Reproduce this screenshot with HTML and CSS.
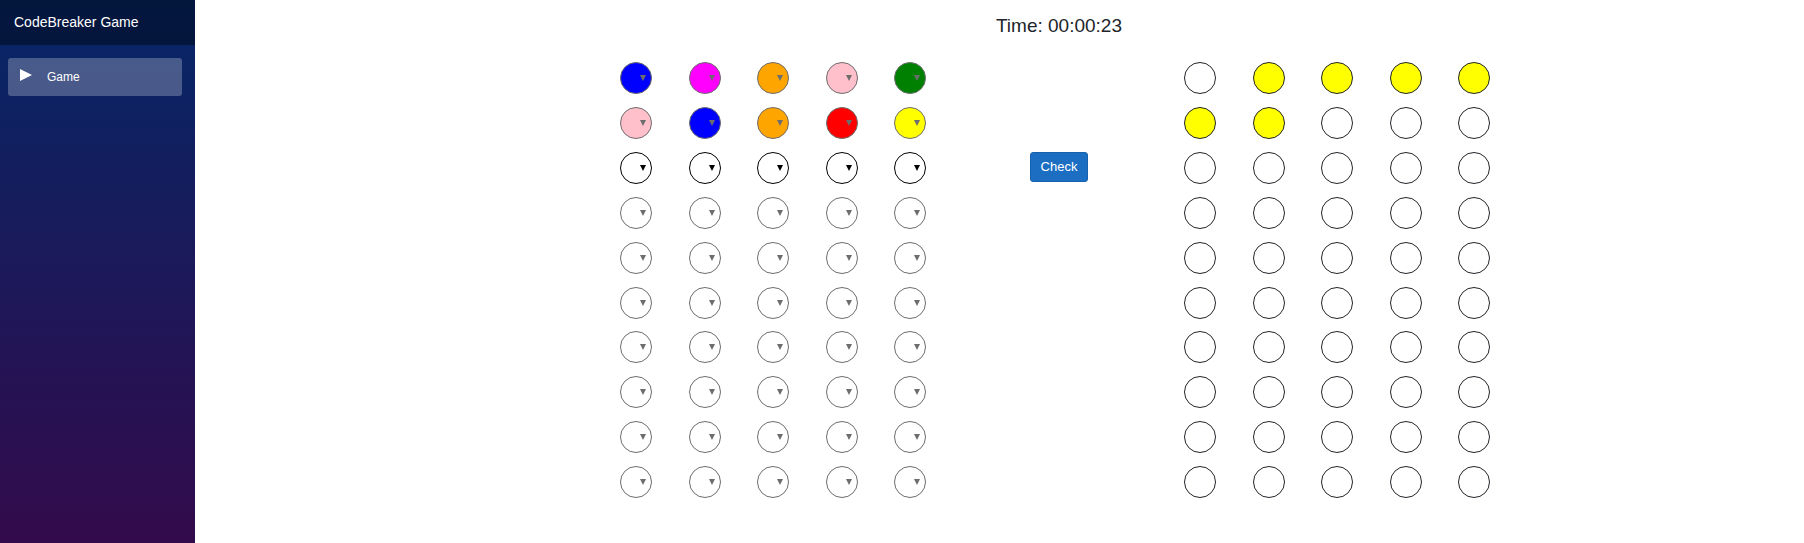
FILE: index.html
```html
<!DOCTYPE html>
<html lang="en">
<head>
<meta charset="utf-8">
<title>CodeBreaker Game</title>
<link rel="stylesheet" href="styles.css">
</head>
<body>
<div class="page">
  <aside class="sidebar">
    <header class="sidebar-top"><a class="brand" href="#">CodeBreaker Game</a></header>
    <nav class="menu">
      <a class="menu-link" href="#">
        <svg class="menu-icon" viewBox="0 0 12 12" aria-hidden="true"><path d="M0 0v12l12-6z" fill="#fff"/></svg>
        <span>Game</span>
      </a>
    </nav>
  </aside>
  <main class="content">
    <div class="columns">
      <h1 class="timer">Time: 00:00:23</h1>
    </div>
    <div class="board" id="board"></div>
  </main>
</div>
<script src="board.js"></script>
</body>
</html>
```
FILE: styles.css
```css
* {
  box-sizing: border-box;
}

body {
  margin: 0;
  background: #fff;
  color: #212529;
  font-family: "Liberation Sans", Arial, sans-serif;
  font-size: 13px;
}

.page {
  display: flex;
  min-height: 100vh;
}

.sidebar {
  flex: none;
  width: 195px;
  background: linear-gradient(180deg, rgb(5, 39, 103) 0%, #3a0647 116%);
}

.sidebar-top {
  display: flex;
  align-items: center;
  height: 45px;
  padding: 0 14px 2px;
  background: rgba(0, 0, 0, 0.4);
}

.brand {
  color: #fff;
  font-size: 14px;
  text-decoration: none;
}

.menu {
  padding: 13px 13px 0 8px;
}

.menu-link {
  display: flex;
  align-items: center;
  gap: 15px;
  height: 38px;
  padding: 0 12px;
  border-radius: 3px;
  background: rgba(255, 255, 255, 0.25);
  color: #fff;
  font-size: 12px;
  text-decoration: none;
}

.menu-icon {
  width: 12px;
  height: 12px;
  margin-bottom: 4px;
}

.content {
  flex: 1;
  min-width: 0;
  padding-top: 14px;
}

.columns {
  display: grid;
  grid-template-columns: 425fr 306fr 258fr 306fr 314fr;
  align-items: start;
}

.timer {
  grid-column: 3;
  margin: 0 0 25px;
  padding-left: 8px;
  font-size: 19px;
  font-weight: 400;
  line-height: 23px;
  text-align: center;
  white-space: nowrap;
}

.board {
  display: grid;
  grid-template-rows: repeat(10, 1fr);
  min-height: 449px;
}

.guess,
.feedback {
  display: flex;
  justify-content: space-between;
}

.guess {
  grid-column: 2;
}

.action {
  grid-column: 3;
  padding-left: 8px;
  text-align: center;
}

.feedback {
  grid-column: 4;
}

.peg {
  display: block;
  width: 32px;
  height: 32px;
  margin: 0;
  padding: 0;
  border: 1px solid #212529;
  border-radius: 50%;
  background-color: #fff;
}

.peg-select {
  appearance: none;
  border-color: #000;
  color: transparent;
  opacity: 1;
  background-image: url("data:image/svg+xml,%3Csvg xmlns='http://www.w3.org/2000/svg' viewBox='0 0 6 6'%3E%3Cpath d='M0 0h6L3 6z' fill='%23000'/%3E%3C/svg%3E");
  background-position: 19px 12px;
  background-repeat: no-repeat;
  background-size: 6px 6px;
}

.peg-select:disabled {
  border-color: #6d6d6d;
  background-image: url("data:image/svg+xml,%3Csvg xmlns='http://www.w3.org/2000/svg' viewBox='0 0 6 6'%3E%3Cpath d='M0 0h6L3 6z' fill='%236d6d6d'/%3E%3C/svg%3E");
}

.blue { background-color: blue; }
.magenta { background-color: magenta; }
.orange { background-color: orange; }
.pink { background-color: pink; }
.green { background-color: green; }
.red { background-color: red; }
.yellow { background-color: yellow; }

.check {
  height: 30px;
  padding: 0 10px;
  border: 1px solid #1861ac;
  border-radius: 3px;
  background: #1b6ec2;
  color: #fff;
  font: inherit;
}
```
FILE: board.js
```js
const ROWS = 10;
const PEGS = 5;
const ACTIVE_ROW = 2;
const COLORS = ["blue", "magenta", "orange", "pink", "green", "red", "yellow"];

const guesses = [
  ["blue", "magenta", "orange", "pink", "green"],
  ["pink", "blue", "orange", "red", "yellow"]
];
const feedback = [
  ["", "yellow", "yellow", "yellow", "yellow"],
  ["yellow", "yellow", "", "", ""]
];

function el(tag, className) {
  const node = document.createElement(tag);
  node.className = className;
  return node;
}

function pegSelect(row, index) {
  const color = (guesses[row] || [])[index] || "";
  const select = el("select", ("peg peg-select " + color).trim());
  select.setAttribute("aria-label", `Row ${row + 1}, peg ${index + 1}`);
  ["", ...COLORS].forEach(name => {
    const option = el("option", name);
    option.value = name;
    select.append(option);
  });
  select.value = color;
  select.disabled = row !== ACTIVE_ROW;
  select.addEventListener("change", () => {
    select.className = ("peg peg-select " + select.value).trim();
  });
  return select;
}

const board = document.getElementById("board");
for (let row = 0; row < ROWS; row++) {
  const line = el("div", "columns");
  const guess = el("div", "guess");
  const result = el("div", "feedback");
  for (let i = 0; i < PEGS; i++) {
    guess.append(pegSelect(row, i));
    result.append(el("span", ("peg " + ((feedback[row] || [])[i] || "")).trim()));
  }
  line.append(guess);
  if (row === ACTIVE_ROW) {
    const action = el("div", "action");
    const button = el("button", "check");
    button.type = "button";
    button.textContent = "Check";
    action.append(button);
    line.append(action);
  }
  line.append(result);
  board.append(line);
}
```
